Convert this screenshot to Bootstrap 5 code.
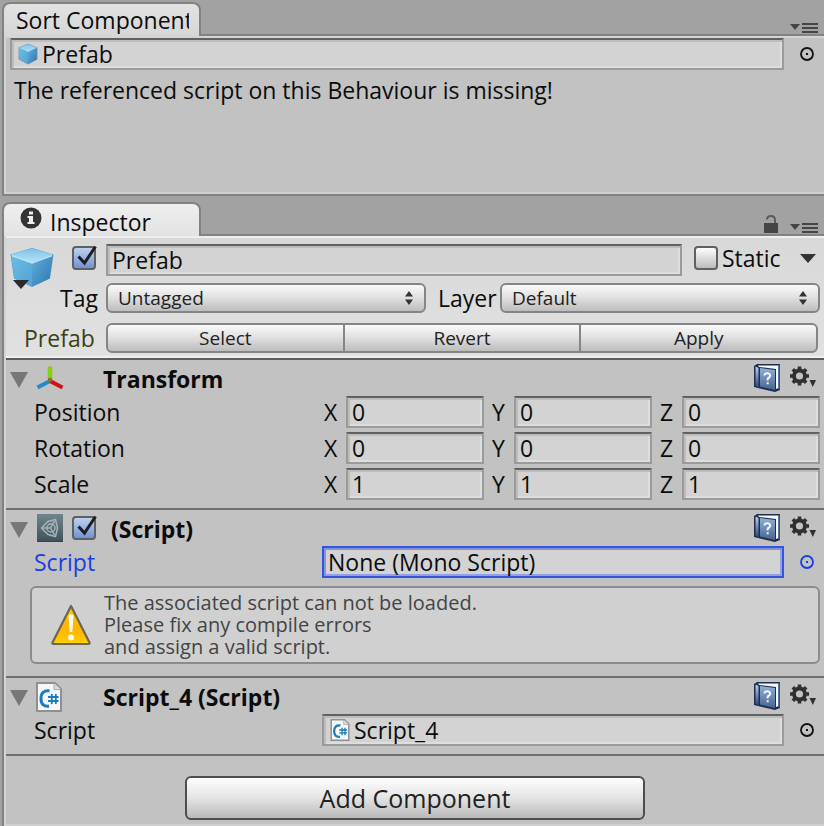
<!DOCTYPE html>
<html lang="en">
<head>
<meta charset="utf-8">
<meta name="viewport" content="width=device-width, initial-scale=1">
<title>Inspector</title>
<link rel="stylesheet" href="https://cdn.jsdelivr.net/npm/bootstrap@5.3.0/dist/css/bootstrap.min.css">
<style>
  body { background: #a2a2a2; color: #0c0c0c; font-family: "Open Sans", "Noto Sans", sans-serif; font-size: 23px; line-height: 28px; }
  svg { display: block; flex: none; }
  .plain-btn { background: none; border: 0; padding: 0; color: inherit; }
  .dock { padding-left: 2px; }
  .tab-strip { height: 34px; }
  .dock-tab { width: 199px; height: 34px; margin-bottom: -2px; padding: 0 10px 0 12px; border: 2px solid #828282; border-bottom: 0; border-radius: 8px 8px 0 0; background: linear-gradient(#e2e2e2, #d6d6d6); color: #0c0c0c; text-decoration: none; overflow: hidden; white-space: nowrap; z-index: 1; }
  .dock-tab.lit { background: linear-gradient(#efefef, #e2e2e2); }
  .tab-text { overflow: hidden; }
  .strip-tools { padding-right: 6px; color: #454545; }
  .dock-panel { border: 2px solid #828282; border-right: 0; box-shadow: inset 2px 2px #d4d4d4, inset 0 -2px #cfcfcf; background: #c2c2c2; padding-left: 2px; }
  .sort-panel { min-height: 162px; padding: 2px 4px 0 6px; }
  .inspector-panel { border-bottom: 0; min-height: calc(100vh - 234px); }
  .inset-box { height: 32px; border: 2px solid #9b9b9b; border-top-color: #616161; box-shadow: inset 2px 2px #bdbdbd, inset -2px -2px #dedede; background: #d3d3d3; padding: 0 4px; min-width: 0; }
  .inset-box input, input.inset-box { outline: 0; color: #0c0c0c; border-radius: 0; }
  .inset-box input { border: 0; padding: 0; background: none; width: 100%; min-width: 0; }
  .inset-box.picked { border-color: #3455e0; box-shadow: inset 2px 2px #8793d4, inset -2px -2px #93a1e2; }
  .item-icon { margin: 0 4px 0 2px; }
  .picker { width: 36px; flex: none; padding-left: 10px; color: #111; }
  .message { margin: 6px 0 0 4px; }
  .head { background: linear-gradient(#d8d8d8, #e1e1e1); border-bottom: 2px solid #5c5c5c; box-shadow: inset 0 2px #efefef, inset 0 -2px #efefef; padding: 8px 4px 4px; }
  .head-row { height: 32px; }
  .head-row + .head-row { margin-top: 6px; }
  .head-row + .head-row + .head-row { margin-top: 8px; }
  .head-left { width: 96px; flex: none; }
  .icons-cell { padding-right: 10px; }
  .icons-cell .tick { margin-top: 2px; }
  .cube-btn { margin-top: 3px; }
  .cube-caret { left: 3px; bottom: -1px; }
  .static-area { width: 138px; flex: none; padding-left: 12px; }
  .layer-label { width: 74px; flex: none; padding-left: 12px; }
  .tick { width: 24px; height: 24px; flex: none; }
  .tick input { appearance: none; display: block; width: 24px; height: 24px; margin: 0; border: 2px solid #606060; border-radius: 4px; background: linear-gradient(#fdfdfd, #bcbcbc); }
  .tick input:checked { background: linear-gradient(#bdd1ef, #6f93d2); }
  .tick svg { position: absolute; left: 0; top: -2px; pointer-events: none; }
  .tick input:not(:checked) + svg { display: none; }
  .raised { border: 2px solid #858585; border-radius: 6px; background: linear-gradient(#fafafa, #e2e2e2 45%, #bdbdbd); color: #222; font-size: 19px; line-height: 24px; height: 30px; padding: 0 10px; }
  .drop { min-width: 0; flex: 1 1 0; }
  .drop select { appearance: none; width: 100%; display: block; }
  .drop svg { position: absolute; right: 13px; top: 8px; pointer-events: none; }
  .action-group { padding-right: 2px; }
  .action-group .raised { flex: 1 1 0; padding: 0; }
  .action-group .raised + .raised { margin-left: -2px; }
  .action-group .raised:not(:first-child) { border-top-left-radius: 0; border-bottom-left-radius: 0; }
  .action-group .raised:not(:last-child) { border-top-right-radius: 0; border-bottom-right-radius: 0; }
  .olive { color: #3b3f14; padding-left: 14px; }
  .comp { border-bottom: 2px solid #707070; padding: 0 4px 8px; }
  .comp-title { height: 36px; }
  .comp-title h2 { font-size: 23px; line-height: 28px; font-weight: 700; margin: 5px 0 0; }
  .fold-btn { width: 26px; flex: none; }
  .kind { width: 36px; flex: none; }
  .enable { width: 31px; flex: none; }
  .enable .tick { margin-top: 6px; }
  .tools { gap: 10px; padding-right: 4px; }
  .row-label { width: 288px; flex: none; margin-left: 24px; }
  .vec { margin-left: 2px; gap: 8px; min-width: 0; }
  .axis { width: 22px; flex: none; }
  .vec-row + .vec-row { margin-top: 4px; }
  .blue { color: #1a3fe0; }
  .note { margin: 8px 0 4px 20px; border: 2px solid #8c8c8c; border-radius: 6px; background: #d0d0d0; color: #444; font-size: 20px; line-height: 22px; padding: 4px 18px; gap: 12px; min-height: 78px; }
  .add-btn { width: 460px; height: 44px; border: 2px solid #4d4d4d; border-radius: 6px; background: linear-gradient(#fefefe, #e4e4e4 50%, #b9b9b9); color: #222; font-size: 25px; line-height: 36px; padding: 0; margin: 20px 0 6px; }
</style>
<script src="https://cdn.jsdelivr.net/npm/bootstrap@5.3.0/dist/js/bootstrap.bundle.min.js"></script>
</head>
<body>
<svg width="0" height="0" class="position-absolute" aria-hidden="true">
  <defs>
    <linearGradient id="cubeTop" x1="0" y1="0" x2="0" y2="1"><stop offset="0" stop-color="#7cc4ea"/><stop offset="1" stop-color="#b4e2f7"/></linearGradient>
    <linearGradient id="cubeLeft" x1="0" y1="0" x2="1" y2="1"><stop offset="0" stop-color="#6fbde6"/><stop offset="1" stop-color="#4fa3d4"/></linearGradient>
    <linearGradient id="cubeRight" x1="0" y1="0" x2="1" y2="1"><stop offset="0" stop-color="#62b0de"/><stop offset="1" stop-color="#2b74ad"/></linearGradient>
    <linearGradient id="bookFace" x1="0" y1="0" x2="0" y2="1"><stop offset="0" stop-color="#8fb0d6"/><stop offset="1" stop-color="#47658f"/></linearGradient>
    <linearGradient id="bookSpine" x1="0" y1="0" x2="0" y2="1"><stop offset="0" stop-color="#b9d0ea"/><stop offset="1" stop-color="#2e4c7c"/></linearGradient>
    <linearGradient id="slate" x1="0" y1="0" x2="0" y2="1"><stop offset="0" stop-color="#71858d"/><stop offset="1" stop-color="#3e5159"/></linearGradient>
    <linearGradient id="amber" x1="0" y1="0" x2="0" y2="1"><stop offset="0" stop-color="#f8c51c"/><stop offset=".6" stop-color="#ffb400"/><stop offset="1" stop-color="#ffd000"/></linearGradient>
    <symbol id="cube" viewBox="0 0 44 40">
      <path d="M22 .5 43.500 7 40 31 22 39.500 4 31 .5 7Z" fill="#5a9cc2"/>
      <path d="M22 1 43 7 22 15 1 7Z" fill="url(#cubeTop)"/>
      <path d="M1 7 22 15V39L4.500 31Z" fill="url(#cubeLeft)"/>
      <path d="M43 7 22 15V39L39.500 31Z" fill="url(#cubeRight)"/>
      <path d="M2 8 22 15.500 42 8" fill="none" stroke="#b9e6f8" stroke-width="1.500"/>
    </symbol>
    <symbol id="cubeSmall" viewBox="0 0 20 22">
      <path d="M10 .5 19.500 4.500V16.500L10 21.500.5 16.500V4.500Z" fill="#7c9aa8"/>
      <path d="M10 1 19 5 10 9 1 5Z" fill="url(#cubeTop)"/>
      <path d="M1 5 10 9V21L1.500 16.500Z" fill="url(#cubeLeft)"/>
      <path d="M19 5 10 9V21L18.500 16.500Z" fill="url(#cubeRight)"/>
    </symbol>
    <symbol id="check" viewBox="0 0 26 26"><path d="M6.500 12.500 12.500 19 23.500 2.500" fill="none" stroke="#1c1e24" stroke-width="3"/></symbol>
    <symbol id="menu" viewBox="0 0 28 12"><path d="M0 2H10L5 8Z" fill="currentColor"/><path d="M12 2H28M12 6H28M12 10H28" stroke="currentColor" stroke-width="2"/></symbol>
    <symbol id="target" viewBox="0 0 14 14"><circle cx="7" cy="7" r="6" fill="none" stroke="currentColor" stroke-width="1.800"/><rect x="6" y="6" width="2" height="2" fill="currentColor"/></symbol>
    <symbol id="fold" viewBox="0 0 18 16"><path d="M0 0H18L9 16Z" fill="#777"/></symbol>
    <symbol id="updown" viewBox="0 0 8 14"><path d="M0 5.500 4 0 8 5.500ZM0 8.500H8L4 14Z" fill="#333"/></symbol>
    <symbol id="book" viewBox="0 0 26 28">
      <path d="M3 0H26V26L21 28 0 23V2Z" fill="#1d2f50"/>
      <path d="M4 1.500H24.500V24L22 25V5L5 3Z" fill="#f4f6f8"/>
      <path d="M24.800 1V25" stroke="#56759f" stroke-width="1.500"/>
      <path d="M1.500 2.500 4.500 4V23L1.500 22Z" fill="url(#bookSpine)"/>
      <path d="M6 4 21 6V26L6 22.500Z" fill="url(#bookFace)"/>
      <path d="M10.500 11.500Q10.500 9 13.500 9.200 16.500 9.500 16 12 15.700 13.500 13.700 14.500V16.500M13.700 18.200V20.200" fill="none" stroke="#f2f6fb" stroke-width="2"/>
    </symbol>
    <symbol id="gear" viewBox="0 0 26 22">
      <g fill="none" stroke="#303030"><circle cx="9.500" cy="10" r="5.500" stroke-width="3.800"/>
      <path d="M9.500.5V4M9.500 16V19.500M0 10H3.500M15.500 10H19M2.800 3.300 5.300 5.800M13.700 14.200 16.200 16.700M2.800 16.700 5.300 14.200M13.700 5.800 16.200 3.300" stroke-width="3.600"/></g>
      <path d="M19.500 14H26L22.800 21Z" fill="#303030"/>
    </symbol>
    <symbol id="csharp" viewBox="0 0 26 30">
      <path d="M1 1H19L25 7V29H1Z" fill="#f4f6f7" stroke="#8d9194" stroke-width="2"/>
      <path d="M18 1V7.500H25" fill="#d9dcde" stroke="#a9adb0"/>
      <path d="M13.500 8.800Q5 8 5 16.500T13 24.200" fill="none" stroke="#1a7cb8" stroke-width="3"/>
      <path d="M15.800 12V22M19.800 12V22M12 15H22.500M12 19H22.500" fill="none" stroke="#1a7cb8" stroke-width="1.800"/>
    </symbol>
  </defs>
</svg>

<main>
  <section class="dock" aria-label="Sort Component">
    <div class="tab-strip d-flex align-items-end justify-content-between">
      <a href="#" class="dock-tab position-relative d-flex align-items-center"><span class="tab-text">Sort Component</span></a>
      <div class="strip-tools"><button class="plain-btn d-block" aria-label="Panel menu"><svg width="28" height="12"><use href="#menu"/></svg></button></div>
    </div>
    <div class="dock-panel sort-panel">
      <div class="d-flex align-items-center">
        <div class="inset-box d-flex align-items-center flex-fill">
          <svg width="20" height="22" class="item-icon"><use href="#cubeSmall"/></svg>
          <input type="text" readonly value="Prefab" aria-label="Object">
        </div>
        <button class="plain-btn picker d-flex justify-content-center" aria-label="Pick object"><svg width="14" height="14"><use href="#target"/></svg></button>
      </div>
      <p class="message">The referenced script on this Behaviour is missing!</p>
    </div>
  </section>

  <section class="dock" aria-label="Inspector">
    <div class="tab-strip d-flex align-items-end justify-content-between mt-1">
      <a href="#" class="dock-tab lit position-relative d-flex align-items-center ps-3">
        <svg width="22" height="22" viewBox="0 0 22 22" class="me-2 mb-1"><circle cx="11" cy="11" r="10.500" fill="#333"/><path d="M9 4.500H13V7.500H9ZM7.500 9H13V15H14.500V17H7.500V15H9V11H7.500Z" fill="#eee"/></svg>
        <span class="pt-1">Inspector</span>
      </a>
      <div class="strip-tools d-flex align-items-end">
        <button class="plain-btn me-2" aria-label="Lock"><svg width="18" height="19" viewBox="0 0 18 19"><path d="M0 8H14V18H0Z" fill="#454545"/><path d="M3 4.500Q3 1 7 1T11 5V8" fill="none" stroke="#5d5d5d" stroke-width="2"/></svg></button>
        <button class="plain-btn" aria-label="Panel menu"><svg width="28" height="12"><use href="#menu"/></svg></button>
      </div>
    </div>

    <div class="dock-panel inspector-panel">
      <div class="head">
        <div class="head-row d-flex align-items-start">
          <div class="head-left icons-cell d-flex justify-content-between align-items-start">
            <button class="plain-btn cube-btn position-relative" aria-label="Object icon">
              <svg width="44" height="41"><use href="#cube"/></svg>
              <svg width="16" height="9" viewBox="0 0 16 9" class="position-absolute cube-caret"><path d="M0 0H16L8 9Z" fill="#2b2b2b"/></svg>
            </button>
            <div class="tick position-relative"><input type="checkbox" checked aria-label="Active"><svg width="26" height="26"><use href="#check"/></svg></div>
          </div>
          <input type="text" class="inset-box flex-fill" value="Prefab" aria-label="Name">
          <div class="static-area d-flex align-items-center">
            <div class="tick position-relative"><input type="checkbox" id="static"><svg width="26" height="26"><use href="#check"/></svg></div>
            <label for="static" class="ps-1">Static</label>
            <button class="plain-btn ms-auto me-1" aria-label="Static options"><svg width="16" height="9" viewBox="0 0 16 9"><path d="M0 0H16L8 9Z" fill="#333"/></svg></button>
          </div>
        </div>
        <div class="head-row d-flex align-items-center">
          <label for="tag" class="head-left text-end pe-2">Tag</label>
          <div class="drop position-relative"><select id="tag" class="raised"><option>Untagged</option></select><svg width="8" height="14"><use href="#updown"/></svg></div>
          <label for="layer" class="layer-label">Layer</label>
          <div class="drop position-relative"><select id="layer" class="raised"><option>Default</option></select><svg width="8" height="14"><use href="#updown"/></svg></div>
        </div>
        <div class="head-row d-flex align-items-center">
          <span class="head-left olive">Prefab</span>
          <div class="action-group d-flex flex-fill" role="group" aria-label="Prefab">
            <button class="raised">Select</button>
            <button class="raised">Revert</button>
            <button class="raised">Apply</button>
          </div>
        </div>
      </div>

      <section class="comp">
        <div class="comp-title d-flex align-items-start">
          <button class="plain-btn fold-btn mt-2 pt-1" aria-label="Toggle Transform"><svg width="18" height="16"><use href="#fold"/></svg></button>
          <div class="kind pt-1">
            <svg width="28" height="28" viewBox="0 0 28 28"><path d="M14 16V2.500" stroke="#86cf12" stroke-width="4.500"/><path d="M14 17 1.500 23.500" stroke="#2389c8" stroke-width="4"/><path d="M14 17 26.500 23.500" stroke="#d3120f" stroke-width="4"/><path d="M12 14H16V17L14 18.500 12 17Z" fill="#7f7a20"/></svg>
          </div>
          <div class="enable"></div>
          <h2>Transform</h2>
          <div class="tools d-flex align-items-start ms-auto pt-1">
            <button class="plain-btn" aria-label="Help"><svg width="26" height="28"><use href="#book"/></svg></button>
            <button class="plain-btn" aria-label="Settings"><svg width="26" height="24" viewBox="0 -2 26 24"><use href="#gear" width="26" height="22"/></svg></button>
          </div>
        </div>
        <div class="vec-row d-flex align-items-center">
          <span class="row-label">Position</span>
          <div class="vec d-flex flex-fill">
            <label class="d-flex align-items-center flex-fill"><span class="axis">X</span><input type="text" class="inset-box w-100" value="0"></label>
            <label class="d-flex align-items-center flex-fill"><span class="axis">Y</span><input type="text" class="inset-box w-100" value="0"></label>
            <label class="d-flex align-items-center flex-fill"><span class="axis">Z</span><input type="text" class="inset-box w-100" value="0"></label>
          </div>
        </div>
        <div class="vec-row d-flex align-items-center">
          <span class="row-label">Rotation</span>
          <div class="vec d-flex flex-fill">
            <label class="d-flex align-items-center flex-fill"><span class="axis">X</span><input type="text" class="inset-box w-100" value="0"></label>
            <label class="d-flex align-items-center flex-fill"><span class="axis">Y</span><input type="text" class="inset-box w-100" value="0"></label>
            <label class="d-flex align-items-center flex-fill"><span class="axis">Z</span><input type="text" class="inset-box w-100" value="0"></label>
          </div>
        </div>
        <div class="vec-row d-flex align-items-center">
          <span class="row-label">Scale</span>
          <div class="vec d-flex flex-fill">
            <label class="d-flex align-items-center flex-fill"><span class="axis">X</span><input type="text" class="inset-box w-100" value="1"></label>
            <label class="d-flex align-items-center flex-fill"><span class="axis">Y</span><input type="text" class="inset-box w-100" value="1"></label>
            <label class="d-flex align-items-center flex-fill"><span class="axis">Z</span><input type="text" class="inset-box w-100" value="1"></label>
          </div>
        </div>
      </section>

      <section class="comp">
        <div class="comp-title d-flex align-items-start">
          <button class="plain-btn fold-btn mt-2 pt-1" aria-label="Toggle Script"><svg width="18" height="16"><use href="#fold"/></svg></button>
          <div class="kind pt-1">
            <svg width="28" height="28" viewBox="0 0 28 28"><path d="M1 0H27V28H1Z" fill="url(#slate)"/><path d="M1 27.500H27" stroke="#34464d"/><g fill="none" stroke="#a5b3b8" stroke-width="1.500"><path d="M5.500 14 12 7.500 19.500 5.500 21.500 14 19.500 22.500 12 20.500Z"/><circle cx="15" cy="14" r="4"/><path d="M6 14H14.500M14.500 14 18.500 7M14.500 14 18.500 21"/></g></svg>
          </div>
          <div class="enable"><div class="tick position-relative"><input type="checkbox" checked aria-label="Enabled"><svg width="26" height="26"><use href="#check"/></svg></div></div>
          <h2 class="ps-2">(Script)</h2>
          <div class="tools d-flex align-items-start ms-auto pt-1">
            <button class="plain-btn" aria-label="Help"><svg width="26" height="28"><use href="#book"/></svg></button>
            <button class="plain-btn" aria-label="Settings"><svg width="26" height="24" viewBox="0 -2 26 24"><use href="#gear" width="26" height="22"/></svg></button>
          </div>
        </div>
        <div class="d-flex align-items-center">
          <label for="script-a" class="row-label blue">Script</label>
          <div class="inset-box picked d-flex align-items-center flex-fill"><input type="text" id="script-a" readonly value="None (Mono Script)"></div>
          <button class="plain-btn picker blue d-flex justify-content-center" aria-label="Pick script"><svg width="14" height="14"><use href="#target"/></svg></button>
        </div>
        <div class="note d-flex align-items-center" role="alert">
          <svg width="42" height="42" viewBox="0 0 42 42"><path d="M21 2 39.500 38.500Q40 40 38 40H4Q2 40 2.500 38.500Z" fill="url(#amber)" stroke="#6d6650" stroke-width="2.200" stroke-linejoin="round"/><path d="M18.500 11.500Q21 9 23.500 11.500L22.300 28H19.700Z" fill="#fffdf2"/><circle cx="21" cy="33.500" r="3" fill="#fffdf2"/></svg>
          <div>The associated script can not be loaded.<br>Please fix any compile errors<br>and assign a valid script.</div>
        </div>
      </section>

      <section class="comp">
        <div class="comp-title d-flex align-items-start">
          <button class="plain-btn fold-btn mt-2 pt-1" aria-label="Toggle Script_4"><svg width="18" height="16"><use href="#fold"/></svg></button>
          <div class="kind pt-1"><svg width="26" height="30"><use href="#csharp"/></svg></div>
          <div class="enable"></div>
          <h2>Script_4 (Script)</h2>
          <div class="tools d-flex align-items-start ms-auto pt-1">
            <button class="plain-btn" aria-label="Help"><svg width="26" height="28"><use href="#book"/></svg></button>
            <button class="plain-btn" aria-label="Settings"><svg width="26" height="24" viewBox="0 -2 26 24"><use href="#gear" width="26" height="22"/></svg></button>
          </div>
        </div>
        <div class="d-flex align-items-center">
          <label for="script-b" class="row-label">Script</label>
          <div class="inset-box d-flex align-items-center flex-fill"><svg width="20" height="22" class="item-icon"><use href="#csharp"/></svg><input type="text" id="script-b" readonly value="Script_4"></div>
          <button class="plain-btn picker d-flex justify-content-center" aria-label="Pick script"><svg width="14" height="14"><use href="#target"/></svg></button>
        </div>
      </section>

      <div class="d-flex justify-content-center"><button class="add-btn">Add Component</button></div>
    </div>
  </section>
</main>
</body>
</html>
